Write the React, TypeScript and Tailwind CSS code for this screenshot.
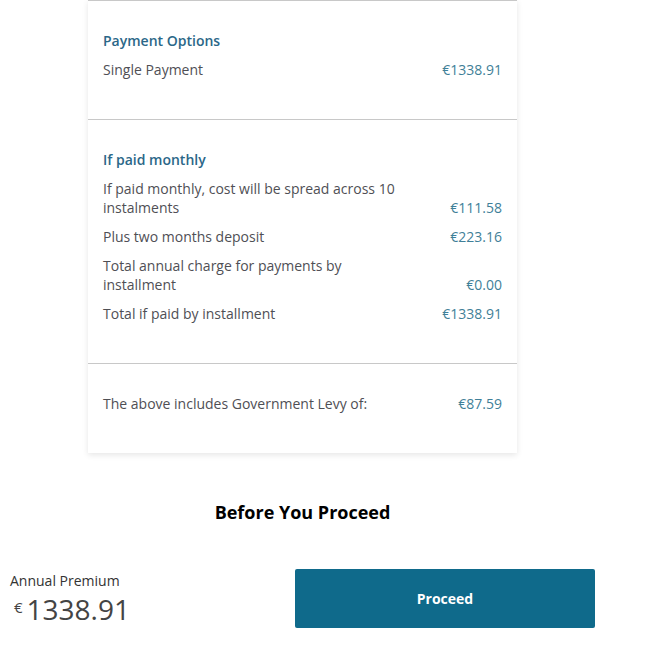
import React from 'react';

interface Row {
  label: string;
  value: string;
}

const monthlyRows: Row[] = [
  { label: 'If paid monthly, cost will be spread across 10 instalments', value: '€111.58' },
  { label: 'Plus two months deposit', value: '€223.16' },
  { label: 'Total annual charge for payments by installment', value: '€0.00' },
  { label: 'Total if paid by installment', value: '€1338.91' },
];

function PriceRow({ label, value }: Row) {
  return (
    <div className="flex items-end mb-[10px] text-[14px] leading-[19px]">
      <div className="w-3/4 text-[#4f4f55]">{label}</div>
      <div className="w-1/4 text-right text-[#3f7f98]">{value}</div>
    </div>
  );
}

function Heading({ children }: { children: React.ReactNode }) {
  return (
    <div className="mb-[10px] text-[14px] leading-[19px] font-semibold text-[#2b6788]">{children}</div>
  );
}

export default function App() {
  return (
    <div className="w-[605px] bg-white pb-6" style={{ fontFamily: '"Open Sans", Arial, sans-serif' }}>
      <div className="w-[429px] mx-auto bg-white border-t border-[#c8c8c8] shadow-[0_2px_6px_rgba(0,0,0,0.1)]">
        <section className="px-[15px] py-[30px] border-b border-[#c8c8c8]">
          <Heading>Payment Options</Heading>
          <PriceRow label="Single Payment" value="€1338.91" />
        </section>

        <section className="px-[15px] py-[30px] border-b border-[#c8c8c8]">
          <Heading>If paid monthly</Heading>
          {monthlyRows.map((row) => (
            <PriceRow key={row.label} label={row.label} value={row.value} />
          ))}
        </section>

        <section className="px-[15px] py-[30px]">
          <PriceRow label="The above includes Government Levy of:" value="€87.59" />
        </section>
      </div>

      <h2 className="mt-[47px] text-center text-[18px] leading-[25px] font-bold text-black">Before You Proceed</h2>

      <div className="mt-[44px] px-[10px] flex justify-between items-start">
        <div className="pt-[2px]">
          <div className="text-[14px] leading-[19px] text-[#333]">Annual Premium</div>
          <div className="flex items-center text-[#444] mt-[1px]">
            <span className="text-[15px] ml-[4px] mr-[4px] -mt-[4px]">€</span>
            <span className="text-[28px] leading-[36px]">1338.91</span>
          </div>
        </div>
        <button className="w-[300px] h-[59px] rounded-[2px] bg-[#0f6a8b] text-white text-[14px] font-bold">
          Proceed
        </button>
      </div>
    </div>
  );
}
